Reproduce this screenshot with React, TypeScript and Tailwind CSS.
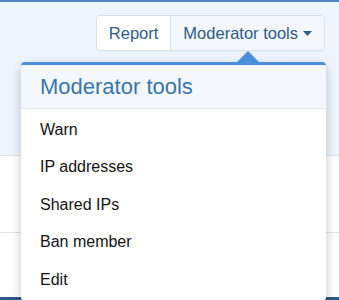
import { useState } from "react";

const items = ["Warn", "IP addresses", "Shared IPs", "Ban member", "Edit"];

export default function App() {
  const [open] = useState(true);

  return (
    <div
      className="relative h-[300px] w-[339px] overflow-hidden bg-white"
      style={{ fontFamily: '"Liberation Sans", Arial, sans-serif' }}
    >
      {/* header block */}
      <div className="h-[156px] border-t-2 border-b border-t-[#4f86c0] border-b-[#dbe3ec] bg-[#eef5fc]">
        <div className="flex justify-end pr-[14px] pt-[13px]">
          <div className="flex h-[36px] overflow-hidden rounded-[4px] border border-[#d8e2ec] text-[16.5px] text-[#2f5b87] shadow-[0_1px_1px_rgba(0,0,0,0.04)]">
            <button className="bg-white px-[12px]">Report</button>
            <button className="flex items-center gap-[5px] border-l border-[#d8e2ec] bg-[#f3f7fc] pl-[12px] pr-[12px]">
              Moderator tools
              <svg width="9" height="5" viewBox="0 0 9 5">
                <path d="M0 0h9L4.5 5z" fill="#2f5b87" />
              </svg>
            </button>
          </div>
        </div>
      </div>

      {/* rows below */}
      <div className="h-[77px] border-b border-[#dde3ea]" />
      <div className="absolute bottom-0 left-0 right-0 h-[3px] bg-[#2d5a86]" />

      {open && (
        <div className="absolute left-[21px] top-[51px] w-[305px]">
          <div className="relative h-[11px]">
            <svg
              className="absolute left-[216px] top-0"
              width="22"
              height="11"
              viewBox="0 0 22 11"
            >
              <path d="M0 11L11 0l11 11z" fill="#4a90d9" />
            </svg>
          </div>
          <div className="overflow-hidden rounded-[4px] border-t-[3px] border-[#4a90d9] bg-white shadow-[0_4px_12px_rgba(0,0,0,0.22)]">
            <div className="flex h-[44px] items-center border-b border-[#dfe6ee] bg-[#f4f8fd] px-[19px] text-[22px] text-[#3875ad]">
              Moderator tools
            </div>
            <div className="pb-[2px] pt-[2px]">
              {items.map((item) => (
                <div
                  key={item}
                  className="flex h-[37.5px] items-center px-[19px] text-[16px] text-[#141414]"
                >
                  {item}
                </div>
              ))}
            </div>
          </div>
        </div>
      )}
    </div>
  );
}
